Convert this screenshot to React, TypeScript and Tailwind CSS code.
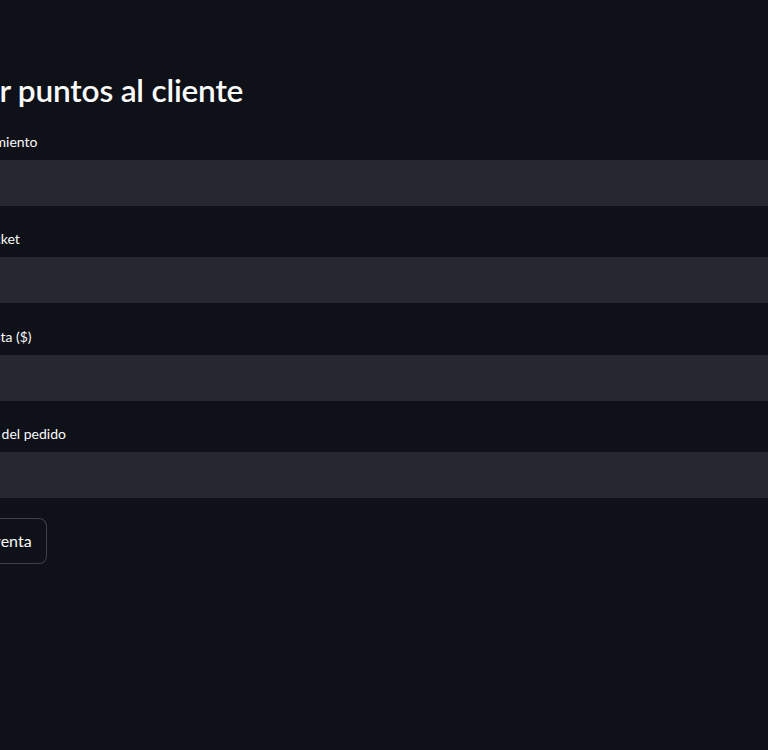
const fields = [
  { label: "Establecimiento", shift: "ml-[30px]" },
  { label: "Número de ticket", shift: "ml-[3px]" },
  { label: "Monto de la venta ($)", shift: "-ml-[9px]" },
  { label: "Número del pedido", shift: "ml-[38px]" },
];

export default function App() {
  return (
    <main className="h-[750px] w-[768px] overflow-hidden bg-[#0e1117] text-[#fafafa] font-['Lato','Liberation_Sans',sans-serif]">
      <div className="ml-[-90px] w-[900px] pt-[70px]">
        {/* the page is scrolled sideways: the left part of the form sits off screen */}
        <h3 className="-ml-[8px] h-[40px] whitespace-nowrap text-[31.6px] font-semibold leading-[40px] tracking-[-0.2px]">
          Agregar puntos al cliente
        </h3>
        <div className="mt-[21px] flex flex-col gap-[22.3px]">
          {fields.map((f) => (
            <div key={f.label}>
              <label className={`block h-[21px] whitespace-nowrap text-[14px] leading-[21px] ${f.shift}`}>
                {f.label}
              </label>
              <input
                className="mt-[8px] block h-[46px] w-full rounded-md bg-[#262730] px-3 text-[14px] outline-none"
                type="text"
              />
            </div>
          ))}
        </div>
        <button className="ml-[2px] mt-[20px] h-[46px] whitespace-nowrap rounded-lg border border-[#fafafa]/20 bg-[#0e1117] px-[14px] text-[16px] leading-none">
          Registrar venta
        </button>
      </div>
    </main>
  );
}
